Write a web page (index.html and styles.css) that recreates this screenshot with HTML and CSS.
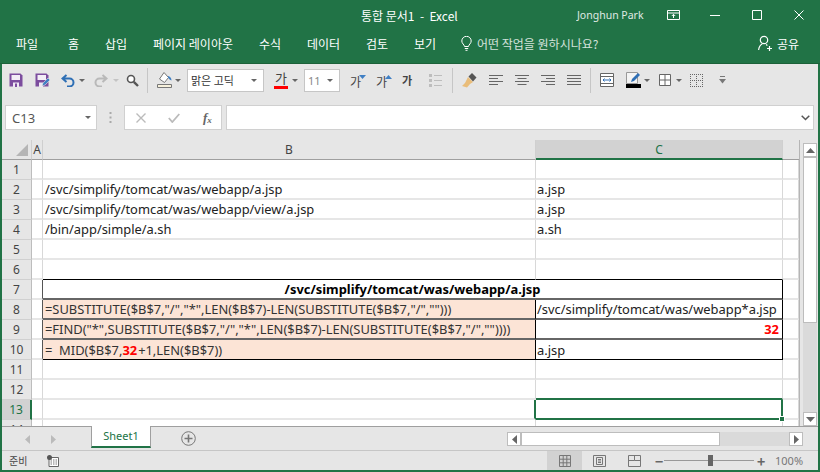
FILE: index.html
```html
<!DOCTYPE html>
<html>
<head>
	<title>통합 문서1 - Excel</title>
	<link rel="stylesheet" href="styles.css">
</head>
<body>
<div class="window">
	<div class="titlebar">
		<span class="doc-title">통합 문서1 &nbsp;-&nbsp; Excel</span>
		<span class="user-name">Jonghun Park</span>
		<svg class="win-btn btn-ribbon" width="13" height="10" viewBox="0 0 13 10"><path d="M.5.5h12v9H.5zM.5 3h12M6.5 8V4.5M4.8 6l1.7-1.7L8.2 6" fill="none" stroke="#fff"/></svg>
		<svg class="win-btn btn-min" width="10" height="10" viewBox="0 0 10 10"><path d="M0 5.5h10" stroke="#fff"/></svg>
		<svg class="win-btn btn-max" width="10" height="10" viewBox="0 0 10 10"><path d="M.5.5h9v9h-9z" fill="none" stroke="#fff"/></svg>
		<svg class="win-btn btn-close" width="10" height="10" viewBox="0 0 10 10"><path d="M.5.5l9 9M9.5.5l-9 9" stroke="#fff"/></svg>
	</div>
	<div class="menubar">
		<span class="tab tab-file">파일</span>
		<span class="tab tab-home">홈</span>
		<span class="tab tab-insert">삽입</span>
		<span class="tab tab-page">페이지 레이아웃</span>
		<span class="tab tab-formula">수식</span>
		<span class="tab tab-data">데이터</span>
		<span class="tab tab-review">검토</span>
		<span class="tab tab-view">보기</span>
		<svg class="bulb" width="11" height="15" viewBox="0 0 11 15"><path d="M3.5 10.5C3.3 8.5.8 7.6.8 5a4.7 4.7 0 0 1 9.400 0c0 2.600-2.500 3.500-2.700 5.500zM3.800 12.500h3.400M4.500 14.300h2" fill="none" stroke="#fff"/></svg>
		<span class="hint">어떤 작업을 원하시나요?</span>
		<svg class="share-icon" width="14" height="16" viewBox="0 0 14 16"><circle cx="6" cy="5" r="3.700" fill="none" stroke="#fff" stroke-width="1.200"/><path d="M.6 15c.4-3.400 2-5.200 3.600-6M8 9.500c.6.300 1 .6 1.400 1M9 13.500h5M11.500 11v5" fill="none" stroke="#fff" stroke-width="1.200"/></svg>
		<span class="share">공유</span>
	</div>
	<div class="toolbar">
		<svg class="ico i-save" width="14" height="14" viewBox="0 0 14 14"><path d="M.5.500h11l2 2v11H.500z" fill="#7c4d9e"/><path d="M2.500 2h8.500v5H2.500z" fill="#f3eef6"/><path d="M4 9.500h6V14H4z" fill="#efe8f3"/><path d="M6 10.500h2V14H6z" fill="#7c4d9e"/></svg>
		<svg class="ico i-saveas" width="15" height="14" viewBox="0 0 15 14"><path d="M.5.500h11l2 2v11H.500z" fill="#7c4d9e"/><path d="M2.500 2h8.500v5H2.500z" fill="#f3eef6"/><path d="M4 9.500h4V14H4z" fill="#efe8f3"/><path d="M7 13l1-3 5-5 2 2-5 5z" fill="#3f7fc4" stroke="#e6e6e6" stroke-width=".6"/></svg>
		<svg class="ico i-undo" width="14" height="13" viewBox="0 0 14 13"><path d="M5.500 1L1.500 4.500 5.500 8M2 4.500h6.500a4 4 0 0 1 0 8H6" fill="none" stroke="#2e6fb5" stroke-width="2"/></svg>
		<i class="caret c-undo"></i>
		<svg class="ico i-redo" width="14" height="13" viewBox="0 0 14 13"><path d="M8.500 1l4 3.500-4 3.500M12 4.500H5.500a4 4 0 0 0 0 8H8" fill="none" stroke="#b9b9b9" stroke-width="2"/></svg>
		<i class="caret c-redo light"></i>
		<svg class="ico i-find" width="13" height="13" viewBox="0 0 13 13"><circle cx="5" cy="5" r="3.500" fill="#fff" stroke="#555" stroke-width="1.600"/><path d="M7.800 7.800L12 12" stroke="#555" stroke-width="2.400"/></svg>
		<i class="sep s1"></i>
		<svg class="ico i-fill" width="16" height="18" viewBox="0 0 16 18"><path d="M7 1.500L2.500 8l5 3.500 4-5z" fill="#fff" stroke="#777"/><path d="M11 5c2 .5 3.500 2 3.500 4.500-1.500-.5-2.500-1.500-3.500-3z" fill="#3f7fc4"/><path d="M.5 13.500h14v3H.500z" fill="#f7f1dc" stroke="#777"/></svg>
		<i class="caret c-fill"></i>
		<div class="select sel-font"><span>맑은 고딕</span><i class="caret"></i></div>
		<div class="fontcolor">가<b></b></div>
		<i class="caret c-color"></i>
		<div class="select sel-size"><span>11</span><i class="caret"></i></div>
		<div class="gl g-shrink">가<svg width="7" height="4" viewBox="0 0 7 4"><path d="M0 0l3.500 4L7 0z" fill="#3f7fc4"/></svg></div>
		<div class="gl g-grow">가<svg width="7" height="4" viewBox="0 0 7 4"><path d="M0 4l3.500-4L7 4z" fill="#3f7fc4"/></svg></div>
		<div class="gl g-third">가</div>
		<svg class="ico i-list" width="13" height="13" viewBox="0 0 13 13"><path d="M0 0h3v3H0zM0 5h3v3H0zM0 10h3v3H0z" fill="#bdbdbd"/><path d="M5 1.500h8M5 6.500h8M5 11.500h8" stroke="#bdbdbd"/></svg>
		<i class="sep s2"></i>
		<svg class="ico i-brush" width="15" height="15" viewBox="0 0 15 15"><path d="M6 4l5 5-3 2-3 3.500L0 13l3-3z" fill="#e9bd7a"/><path d="M6.500 3.500L10 0l4.500 4.500-3.500 4z" fill="#555"/></svg>
		<svg class="ico i-al1" width="14" height="11" viewBox="0 0 14 11"><path d="M0 .5h14M0 3.500h9M0 6.500h14M0 9.500h9" stroke="#666"/></svg>
		<svg class="ico i-al2" width="14" height="11" viewBox="0 0 14 11"><path d="M0 .5h14M2.500 3.500h9M0 6.500h14M2.500 9.500h9" stroke="#666"/></svg>
		<svg class="ico i-al3" width="14" height="11" viewBox="0 0 14 11"><path d="M0 .5h14M5 3.500h9M0 6.500h14M5 9.500h9" stroke="#666"/></svg>
		<svg class="ico i-al4" width="14" height="11" viewBox="0 0 14 11"><path d="M0 .5h14M0 3.500h14M0 6.500h14M0 9.500h14" stroke="#666"/></svg>
		<i class="sep s3"></i>
		<svg class="ico i-merge" width="14" height="14" viewBox="0 0 14 14"><path d="M.5.500h13v13H.500z" fill="#fff" stroke="#666"/><path d="M.5 3.500h13M.5 10.500h13" stroke="#666"/><path d="M3 7h8M4.500 5.500L3 7l1.500 1.500M9.500 5.500L11 7 9.500 8.500" fill="none" stroke="#2e6fb5"/></svg>
		<svg class="ico i-pen" width="16" height="16" viewBox="0 0 16 16"><path d="M.5.500h11v11H.500z" fill="#f4f4f4" stroke="#999"/><path d="M5 10l1-3 6-6 2 2-6 6z" fill="#2e6fb5"/><path d="M0 12h15v4H0z"/></svg>
		<i class="caret c-pen"></i>
		<svg class="ico i-border" width="12" height="12" viewBox="0 0 12 12"><path d="M.5.500h11v11H.500zM6 .5v11M.5 6h11" fill="#fff" stroke="#666"/></svg>
		<i class="caret c-border"></i>
		<svg class="ico i-dots" width="13" height="13" viewBox="0 0 13 13"><path d="M0 .5h13M0 6.500h13M0 12.500h13M.5 0v13M6.500 0v13M12.500 0v13" fill="none" stroke="#666" stroke-dasharray="1 1"/></svg>
		<svg class="ico i-more" width="7" height="8" viewBox="0 0 7 8"><path d="M1 .5h5" stroke="#777"/><path d="M0 3h7L3.500 7.500z" fill="#777"/></svg>
	</div>
	<div class="formulabar">
		<div class="namebox"><span>C13</span><i class="caret"></i></div>
		<svg class="fdots" width="3" height="11" viewBox="0 0 3 11"><path d="M1.500 0v11" stroke="#aaa" stroke-width="2" stroke-dasharray="2 2.500"/></svg>
		<div class="fbtns">
			<svg width="10" height="10" viewBox="0 0 10 10"><path d="M.5.500l9 9M9.500.500l-9 9" stroke="#bbb" stroke-width="1.400"/></svg>
			<svg width="12" height="10" viewBox="0 0 12 10"><path d="M.8 5l3.500 4 7-8" fill="none" stroke="#bbb" stroke-width="1.800"/></svg>
			<span class="fx">f<sub>x</sub></span>
		</div>
		<div class="finput"><svg width="9" height="6" viewBox="0 0 9 6"><path d="M.7.700l3.800 3.800L8.300.7" fill="none" stroke="#555" stroke-width="1.500"/></svg></div>
	</div>
	<div class="sheet-area">
		<div class="sheet">
			<table class="grid">
				<colgroup><col class="w-head"><col class="w-a"><col class="w-b"><col class="w-c"><col class="w-d"></colgroup>
				<thead>
					<tr><th class="corner"><i></i></th><th>A</th><th>B</th><th class="active-col">C</th><th class="blank-head"></th></tr>
				</thead>
				<tbody>
					<tr><th>1</th><td></td><td></td><td></td><td></td></tr>
					<tr><th>2</th><td></td><td>/svc/simplify/tomcat/was/webapp/a.jsp</td><td>a.jsp</td><td></td></tr>
					<tr><th>3</th><td></td><td>/svc/simplify/tomcat/was/webapp/view/a.jsp</td><td>a.jsp</td><td></td></tr>
					<tr><th>4</th><td></td><td>/bin/app/simple/a.sh</td><td>a.sh</td><td></td></tr>
					<tr><th>5</th><td></td><td></td><td></td><td></td></tr>
					<tr><th>6</th><td></td><td class="under"></td><td class="under"></td><td></td></tr>
					<tr><th>7</th><td class="before"></td><td class="title-cell" colspan="2">/svc/simplify/tomcat/was/webapp/a.jsp</td><td class="after"></td></tr>
					<tr><th>8</th><td class="before"></td><td class="fml">=SUBSTITUTE($B$7,"/","*",LEN($B$7)-LEN(SUBSTITUTE($B$7,"/","")))</td><td class="res">/svc/simplify/tomcat/was/webapp*a.jsp</td><td class="after"></td></tr>
					<tr><th>9</th><td class="before"></td><td class="fml">=FIND("*",SUBSTITUTE($B$7,"/","*",LEN($B$7)-LEN(SUBSTITUTE($B$7,"/",""))))</td><td class="res num">32</td><td class="after"></td></tr>
					<tr><th>10</th><td class="before"></td><td class="fml">= &nbsp;MID($B$7,<b>32</b>+1,LEN($B$7))</td><td class="res">a.jsp</td><td class="after"></td></tr>
					<tr><th>11</th><td></td><td></td><td></td><td></td></tr>
					<tr><th>12</th><td></td><td></td><td class="above-sel"></td><td></td></tr>
					<tr><th class="active-row">13</th><td></td><td class="left-sel"></td><td class="selected"><i class="handle"></i></td><td></td></tr>
					<tr><th>14</th><td></td><td></td><td></td><td></td></tr>
				</tbody>
			</table>
		</div>
		<div class="vscroll">
			<div class="sb-btn"><svg width="9" height="5" viewBox="0 0 9 5"><path d="M0 5l4.500-5L9 5z" fill="#666"/></svg></div>
			<div class="v-thumb"></div>
			<div class="sb-track"></div>
			<div class="sb-btn"><svg width="9" height="5" viewBox="0 0 9 5"><path d="M0 0l4.500 5L9 0z" fill="#666"/></svg></div>
		</div>
	</div>
	<div class="sheetbar">
		<svg class="nav n1" width="5" height="9" viewBox="0 0 5 9"><path d="M5 0L0 4.500 5 9z" fill="#bbb"/></svg>
		<svg class="nav n2" width="5" height="9" viewBox="0 0 5 9"><path d="M0 0l5 4.500L0 9z" fill="#bbb"/></svg>
		<div class="sheet-tab">Sheet1</div>
		<svg class="add-sheet" width="15" height="15" viewBox="0 0 15 15"><circle cx="7.500" cy="7.500" r="6.800" fill="none" stroke="#777"/><path d="M7.500 3.500v8M3.500 7.500h8" stroke="#777" stroke-width="1.600"/></svg>
		<div class="hscroll">
			<div class="sb-btn"><svg width="5" height="9" viewBox="0 0 5 9"><path d="M5 0L0 4.500 5 9z" fill="#666"/></svg></div>
			<div class="h-thumb"></div>
			<div class="sb-track"></div>
			<div class="sb-btn"><svg width="5" height="9" viewBox="0 0 5 9"><path d="M0 0l5 4.500L0 9z" fill="#666"/></svg></div>
		</div>
	</div>
	<div class="statusbar">
		<span class="ready">준비</span>
		<svg class="macro" width="12" height="12" viewBox="0 0 12 12"><path d="M2 2.500h9.500v9H2z" fill="#fff" stroke="#666"/><path d="M3.500 5h7M3.500 7h7M3.500 9h7" stroke="#777" stroke-dasharray="1.500 1"/><circle cx="2.500" cy="2.500" r="2.500" fill="#555"/></svg>
		<div class="view-btn on"><svg width="12" height="12" viewBox="0 0 12 12"><path d="M.5.500h11v11H.500zM4.200.5v11M7.800.5v11M.5 4.200h11M.5 7.800h11" fill="none" stroke="#777"/></svg></div>
		<div class="view-btn"><svg width="13" height="12" viewBox="0 0 13 12"><path d="M.5.500h12v11H.500z" fill="none" stroke="#777"/><path d="M3.500 2.500h6v7h-6zM5 4.500h3M5 6h3M5 7.500h3" fill="none" stroke="#777"/></svg></div>
		<div class="view-btn"><svg width="13" height="12" viewBox="0 0 13 12"><path d="M.5.500h12v11H.500z" fill="none" stroke="#777"/><path d="M6.500.5v5h-6M6.500 5.500h6" fill="none" stroke="#777"/></svg></div>
		<span class="zoom-sign minus">−</span>
		<div class="slider"><i></i></div>
		<span class="zoom-sign plus">+</span>
		<span class="zoom-val">100%</span>
	</div>
</div>
</body>
</html>
```
FILE: styles.css
```css
* {
	box-sizing: border-box;
}
html, body {
	margin: 0;
	padding: 0;
}
body {
	font-family: "Noto Sans CJK KR", "Noto Sans", sans-serif;
	background-color: #e6e6e6;
	overflow: hidden;
}
.window {
	width: 820px;
	height: 472px;
	display: flex;
	flex-direction: column;
	border-left: 2px solid #217346;
	border-right: 2px solid #217346;
	border-bottom: 2px solid #217346;
	background-color: #e6e6e6;
}
.titlebar, .menubar {
	margin: 0 -2px;
	background-color: #217346;
	color: white;
	display: flex;
	align-items: center;
	white-space: nowrap;
}
.titlebar {
	height: 33px;
	font-size: 12px;
	padding-bottom: 3px;
	flex-shrink: 0;
}
.doc-title {
	margin-left: 361px;
	width: 216px;
}
.user-name {
	width: 90px;
	font-family: "Noto Sans", sans-serif;
	font-size: 10.500px;
	opacity: .85;
}
.btn-ribbon { margin-right: 30px; }
.btn-min { margin-right: 32px; }
.btn-max { margin-right: 32px; }
.menubar {
	height: 31px;
	font-size: 12px;
	padding-bottom: 10px;
	border-bottom: 1px solid #1c6139;
	flex-shrink: 0;
}
.tab-file { margin-left: 16px; width: 52px; }
.tab-home { width: 37px; }
.tab-insert { width: 48px; }
.tab-page { width: 106px; }
.tab-formula { width: 48px; }
.tab-data { width: 59px; }
.tab-review { width: 48px; }
.tab-view { width: 47px; }
.bulb { margin-right: 5px; }
.hint {
	width: 281px;
	opacity: .8;
}
.share-icon { margin-right: 5px; }

/* toolbar */
.toolbar {
	height: 31px;
	display: flex;
	align-items: center;
	flex-shrink: 0;
	padding-top: 1px;
}
.ico {
	flex-shrink: 0;
	display: block;
}
.caret {
	display: block;
	flex-shrink: 0;
	width: 0;
	height: 0;
	border-left: 3px solid transparent;
	border-right: 3px solid transparent;
	border-top: 3px solid #666;
}
.caret.light {
	border-top-color: #c4c4c4;
}
.sep {
	display: block;
	flex-shrink: 0;
	width: 1px;
	height: 25px;
	background-color: #c6c6c6;
}
.i-save { margin-left: 7px; }
.i-saveas { margin-left: 12px; }
.i-undo { margin-left: 11px; }
.c-undo { margin-left: 4px; }
.i-redo { margin-left: 9px; }
.c-redo { margin-left: 5px; }
.i-find { margin-left: 7px; }
.s1 { margin-left: 8px; }
.i-fill { margin-left: 9px; }
.c-fill { margin-left: 2px; }
.select {
	height: 23px;
	background-color: white;
	border: 1px solid #c6c6c6;
	display: flex;
	align-items: center;
	justify-content: space-between;
	padding: 0 6px 0 3px;
	font-size: 11px;
	color: #333;
	flex-shrink: 0;
}
.sel-font {
	margin-left: 6px;
	width: 77px;
}
.fontcolor {
	margin-left: 10px;
	width: 14px;
	height: 20px;
	font-size: 13px;
	line-height: 16px;
	color: #444;
	text-align: center;
}
.fontcolor b {
	display: block;
	height: 3px;
	background-color: #f00;
}
.c-color { margin-left: 4px; }
.sel-size {
	margin-left: 6px;
	width: 36px;
	color: #888;
	font-family: "Noto Sans", sans-serif;
}
.gl {
	display: flex;
	flex-shrink: 0;
	font-size: 12px;
	line-height: 16px;
	color: #444;
	width: 13px;
	position: relative;
	padding-top: 3px;
}
.gl svg {
	position: absolute;
	top: 4px;
	right: -3px;
}
.g-shrink { margin-left: 10px; }
.g-grow { margin-left: 13px; }
.g-third {
	margin-left: 13px;
	padding-top: 0;
	font-size: 11px;
	font-weight: bold;
}
.i-list { margin-left: 14px; }
.s2 { margin-left: 10px; }
.i-brush { margin-left: 9px; }
.i-al1 { margin-left: 12px; }
.i-al2, .i-al3, .i-al4 { margin-left: 12px; }
.s3 { margin-left: 9px; }
.i-merge { margin-left: 9px; }
.i-pen { margin-left: 12px; }
.c-pen { margin-left: 2px; }
.i-border { margin-left: 9px; }
.c-border { margin-left: 5px; }
.i-dots { margin-left: 8px; }
.i-more { margin-left: 16px; }

/* formula bar */
.formulabar {
	height: 45px;
	flex-shrink: 0;
	display: flex;
	align-items: flex-start;
	padding: 10px 4px 0 3px;
}
.namebox, .fbtns, .finput {
	height: 25px;
	background-color: white;
	border: 1px solid #d0d0d0;
	display: flex;
	align-items: center;
}
.namebox {
	width: 92px;
	justify-content: space-between;
	padding: 0 5px 0 6px;
	font-family: "Noto Sans", sans-serif;
	font-size: 13px;
	color: #555;
}
.fdots {
	margin: 7px 12px 0 12px;
}
.fbtns {
	width: 98px;
	padding-left: 11px;
}
.fbtns svg:nth-child(2) { margin-left: 22px; }
.fx {
	margin-left: 23px;
	font-family: "Liberation Serif", serif;
	font-style: italic;
	font-weight: bold;
	font-size: 13px;
	color: #666;
}
.fx sub { font-size: 9px; vertical-align: -1px; }
.finput {
	margin-left: 4px;
	flex: 1;
	justify-content: flex-end;
	padding-right: 3px;
}

/* sheet */
.sheet-area {
	height: 286px;
	flex-shrink: 0;
	display: flex;
	overflow: hidden;
}
.sheet {
	width: 798px;
	overflow: hidden;
	background-color: white;
	border-right: 1px solid #b5b5b5;
}
.grid {
	border-collapse: separate;
	border-spacing: 0;
	table-layout: fixed;
	width: 797px;
	font-family: "Noto Sans", sans-serif;
	font-size: 12.900px;
	color: #222;
}
.w-head { width: 30px; }
.w-a { width: 11px; }
.w-b { width: 493px; }
.w-c { width: 247px; }
.w-d { width: 16px; }
.grid tr {
	height: 20px;
}
.grid td {
	padding: 0 2px;
	border-right: 1px solid #d8d8d8;
	border-bottom: 2px solid #e6e6e6;
	white-space: nowrap;
	overflow: hidden;
	height: 20px;
}
.grid td:nth-child(4) {
	padding-left: 1px;
}
.grid th {
	padding: 0;
	background-color: #e6e6e6;
	font-weight: normal;
	font-size: 12px;
	color: #444;
	border-right: 1px solid #bdbdbd;
	border-bottom: 1px solid #d0d0d0;
	height: 20px;
	overflow: hidden;
}
.grid thead th {
	height: 20px;
	border-right: 1px solid #cfcfcf;
	border-bottom: 1px solid #9f9f9f;
}
.corner {
	position: relative;
}
.corner i {
	position: absolute;
	right: 3px;
	bottom: 3px;
	width: 0;
	height: 0;
	border-left: 12px solid transparent;
	border-bottom: 12px solid #b5b5b5;
}
.grid thead .active-col {
	background-color: #d2d2d2;
	color: #217346;
	border-bottom: 2px solid #217346;
}
.grid thead .blank-head {
	background-color: #e6e6e6;
	border-right: 0;
	border-bottom: 1px solid #9f9f9f;
}
.grid .active-row {
	background-color: #d2d2d2;
	color: #217346;
	border-right: 2px solid #217346;
}
.grid .under {
	border-bottom-color: #000;
	border-bottom-width: 1px;
}
.grid .before {
	border-right: 1px solid #555;
}
.grid .after {
	border-bottom: 2px solid #e6e6e6;
}
.grid .title-cell {
	border-right: 1px solid #000;
	border-bottom: 2px solid #666;
	font-weight: bold;
	text-align: center;
	color: #000;
}
.grid .fml {
	background-color: #fce4d6;
	border-right: 1px solid #000;
	border-bottom: 2px solid #666;
	color: #333;
}
.grid .fml b {
	color: #f00;
	margin-right: 1px;
}
.grid .res {
	border-right: 1px solid #000;
	border-bottom: 2px solid #666;
}
.grid tr:nth-child(10) td.fml, .grid tr:nth-child(10) td.res {
	border-bottom: 1px solid #000;
}
.grid .num {
	text-align: right;
	font-weight: bold;
	color: #f00;
	padding-right: 3px;
}
.grid .above-sel {
	border-bottom: 2px solid #217346;
}
.grid .left-sel {
	border-right: 2px solid #217346;
}
.grid .selected {
	position: relative;
	overflow: visible;
	border-right: 2px solid #217346;
	border-bottom: 2px solid #217346;
}
.handle {
	position: absolute;
	right: -4px;
	bottom: -4px;
	width: 6px;
	height: 6px;
	background-color: #217346;
	border: 1px solid white;
}

/* scrollbars */
.vscroll {
	width: 14px;
	margin-left: 3px;
	margin-top: 3px;
	display: flex;
	flex-direction: column;
	background-color: #dadada;
}
.sb-btn {
	width: 14px;
	height: 14px;
	background-color: white;
	border: 1px solid #bdbdbd;
	display: flex;
	align-items: center;
	justify-content: center;
	flex-shrink: 0;
}
.v-thumb {
	height: 166px;
	background-color: white;
	border: 1px solid #bdbdbd;
	width: 14px;
}
.sb-track {
	flex: 1;
}
.sheetbar {
	height: 25px;
	flex-shrink: 0;
	display: flex;
	align-items: flex-start;
	border-top: 1px solid #9f9f9f;
	border-bottom: 1px solid #c6c6c6;
}
.nav { margin-top: 8px; }
.n1 { margin-left: 23px; }
.n2 { margin-left: 21px; }
.sheet-tab {
	margin-left: 35px;
	margin-top: -1px;
	width: 60px;
	height: 22px;
	background-color: white;
	border-left: 1px solid #9f9f9f;
	border-right: 1px solid #9f9f9f;
	border-bottom: 2px solid #217346;
	text-align: center;
	font-family: "Noto Sans", sans-serif;
	font-size: 11px;
	line-height: 20px;
	color: #217346;
}
.add-sheet {
	margin-left: 30px;
	margin-top: 4px;
}
.hscroll {
	margin-left: 311px;
	margin-top: 5px;
	width: 296px;
	height: 14px;
	display: flex;
	background-color: #dadada;
}
.h-thumb {
	width: 199px;
	background-color: white;
	border: 1px solid #bdbdbd;
}
.statusbar {
	flex: 1;
	display: flex;
	align-items: center;
	font-size: 10px;
	color: #444;
}
.ready {
	margin-left: 7px;
	width: 38px;
}
.macro {
	margin-right: 488px;
}
.view-btn {
	width: 35px;
	height: 19px;
	display: flex;
	align-items: center;
	justify-content: center;
}
.view-btn.on {
	background-color: #d2d2d2;
}
.zoom-sign {
	font-size: 14px;
	font-weight: bold;
	color: #666;
	line-height: 1;
	text-align: center;
}
.minus {
	margin-left: 3px;
	width: 6px;
}
.plus {
	margin-left: 3px;
	width: 7px;
}
.slider {
	margin-left: 3px;
	width: 90px;
	height: 1px;
	background-color: #999;
	position: relative;
}
.slider i {
	position: absolute;
	left: 44px;
	top: -5px;
	width: 5px;
	height: 11px;
	background-color: #666;
}
.zoom-val {
	margin-left: 11px;
	font-family: "Noto Sans", sans-serif;
	font-size: 11px;
	color: #777;
}
```
